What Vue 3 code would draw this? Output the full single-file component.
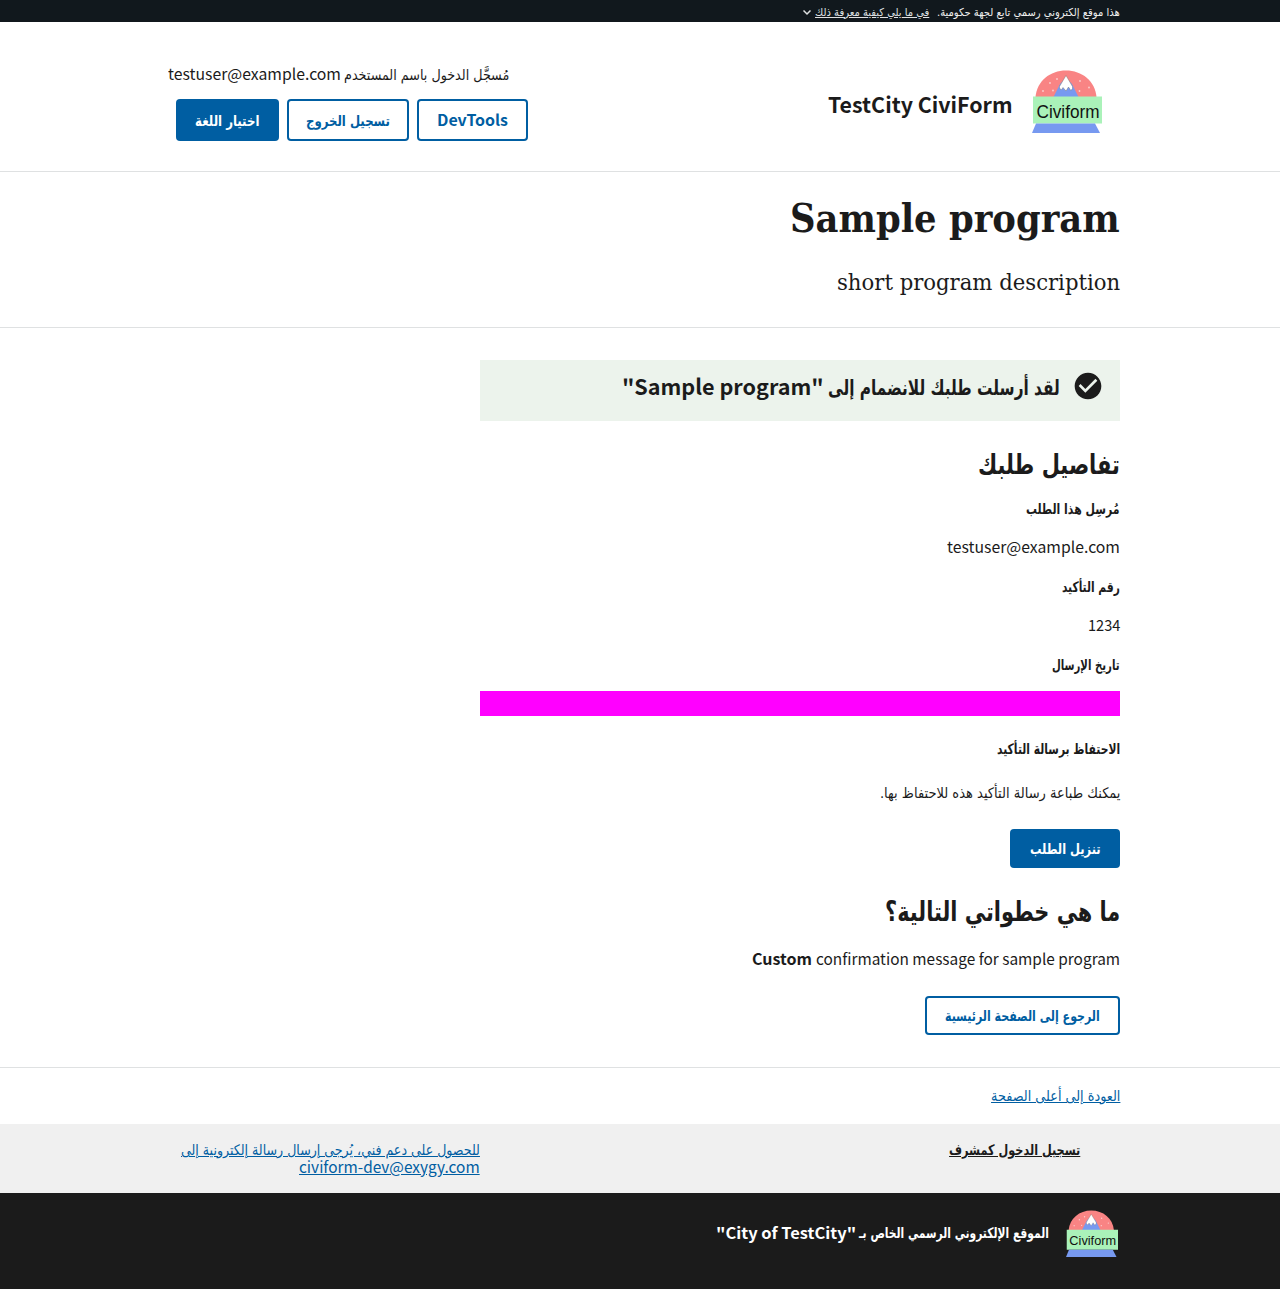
<script setup>
import { h } from 'vue'

// Condenses a single-line run of text to a given measure.
const vFit = {
  mounted(el, { value }) {
    const natural = el.offsetWidth
    if (!natural) return
    el.style.transform = `scaleX(${value / natural})`
    el.style.marginLeft = `${value - natural}px`
  },
}

const dots = [[10, 21], [17, 13], [20, 20.500], [24, 9], [47, 11], [46.500, 21], [56, 17.500]]

const CiviLogo = () =>
  h('svg', { viewBox: '0 0 70 63', role: 'img', overflow: 'visible' }, [
    h('path', { d: 'M3.500 27C5 11 18 .5 34 .5S63 11 64.500 27z', fill: '#f98484' }),
    ...dots.map(([x, y]) => h('circle', { cx: x + 1, cy: y, r: 0.9, fill: '#fbd0cf' })),
    h('path', { d: 'M21.500 27 28 14 34 8l6 6 6.500 13z', fill: '#7799f0' }),
    h('path', {
      d: 'M34 5.500 27.500 16.500v1.500l1.800 2 1.700-2.500 3 3.500 2.500-4 2.400 3.500 1.600-2v-2z',
      fill: '#fff', stroke: '#666', 'stroke-width': 0.4,
    }),
    h('path', { d: 'M1 26.500h69v27H1z', fill: '#aaf2b9' }),
    h('path', { d: 'M4 53.500h59l5 9.500H0z', fill: '#7799f0' }),
    h('text', {
      x: 4.500, y: 47.500, 'font-family': '"Liberation Sans", sans-serif', 'font-size': 17.500, 'font-weight': 400, direction: 'ltr',
      textLength: 63, lengthAdjust: 'spacingAndGlyphs', fill: '#111',
    }, 'Civiform'),
  ])
</script>

<template>
  <div class="page" dir="rtl" lang="ar">
    <div class="banner">
      <div class="wrap banner-row">
        <span v-fit="183" class="t">هذا موقع إلكتروني رسمي تابع لجهة حكومية.</span>
        <a v-fit="114" class="t how">في ما يلي كيفية معرفة ذلك</a>
        <svg class="chev" viewBox="0 0 8 6"><path d="M.5.5L4 4l3.500-3.500" fill="none" stroke="#dfe1e2" stroke-width="1.500" /></svg>
      </div>
    </div>

    <header class="top">
      <div class="wrap top-row">
        <div class="brand">
          <CiviLogo class="logo" />
          <span v-fit="185" class="t la brand-name">TestCity CiviForm</span>
        </div>
        <div class="account">
          <div class="who">
            <span v-fit="165" class="t">مُسجَّل الدخول باسم المستخدم</span>
            <span v-fit="173" class="t la">testuser@example.com</span>
          </div>
          <div class="actions">
            <button class="btn outline dev"><span v-fit="71" class="t la">DevTools</span></button>
            <button class="btn outline out"><span v-fit="84" class="t">تسجيل الخروج</span></button>
            <button class="btn lang"><span v-fit="64" class="t">اختيار اللغة</span></button>
          </div>
        </div>
      </div>
    </header>

    <section class="intro">
      <div class="wrap">
        <h1><span v-fit="330" class="t">Sample program</span></h1>
        <p class="desc"><span v-fit="283" class="t">short program description</span></p>
      </div>
    </section>

    <main class="wrap">
      <div class="content">
        <div class="alert">
          <svg class="check" viewBox="0 0 24 24"><path fill="#1b1b1b" d="M12 2C6.480 2 2 6.480 2 12s4.480 10 10 10 10-4.480 10-10S17.520 2 12 2zm-2 15-5-5 1.410-1.410L10 14.170l7.590-7.590L19 8l-9 9z" /></svg>
          <span v-fit="232" class="t">لقد أرسلت طلبك للانضمام إلى</span>
          <span v-fit="202" class="t la">"Sample program"</span>
        </div>
        <h2><span v-fit="142" class="t">تفاصيل طلبك</span></h2>
        <p class="row label"><span v-fit="94" class="t">مُرسِل هذا الطلب</span></p>
        <p class="row"><span v-fit="173" class="t la">testuser@example.com</span></p>
        <p class="row label"><span v-fit="58" class="t">رقم التأكيد</span></p>
        <p class="row"><span v-fit="32" class="t la">1234</span></p>
        <p class="row label"><span v-fit="68" class="t">تاريخ الإرسال</span></p>
        <div class="date"></div>
        <p class="row label keep"><span v-fit="123" class="t">الاحتفاظ برسالة التأكيد</span></p>
        <p class="row print"><span v-fit="241" class="t">يمكنك طباعة رسالة التأكيد هذه للاحتفاظ بها.</span></p>
        <button class="btn download"><span v-fit="71" class="t">تنزيل الطلب</span></button>
        <h2 class="next"><span v-fit="235" class="t">ما هي خطواتي التالية؟</span></h2>
        <p class="row custom" dir="ltr">
          <strong v-fit="60" class="t la">Custom</strong>
          <span v-fit="304" class="t la">confirmation message for sample program</span>
        </p>
        <button class="btn outline home"><span v-fit="155" class="t">الرجوع إلى الصفحة الرئيسية</span></button>
      </div>
    </main>

    <footer>
      <div class="back"><div class="wrap"><a v-fit="129" class="t link">العودة إلى أعلى الصفحة</a></div></div>
      <div class="support">
        <div class="wrap support-row">
          <a v-fit="131" class="t admin">تسجيل الدخول كمشرف</a>
          <div class="contact">
            <a v-fit="299" class="t link">للحصول على دعم فني، يُرجى إرسال رسالة إلكترونية إلى</a>
            <a v-fit="181" class="t la link">civiform-dev@exygy.com</a>
          </div>
        </div>
      </div>
      <div class="identity">
        <div class="wrap identity-row">
          <CiviLogo class="logo-small" />
          <span v-fit="190" class="t">الموقع الإلكتروني الرسمي الخاص بـ</span>
          <span v-fit="140" class="t la">"City of TestCity"</span>
        </div>
      </div>
    </footer>
  </div>
</template>

<style>
body { margin: 0; background: #fff; }
</style>

<style scoped>
.page { font-family: "DejaVu Sans", sans-serif; font-size: 14.500px; color: #1b1b1b; height: 1289px; overflow: hidden; }
.wrap { width: 960px; margin: 0 auto; }
.t { display: inline-block; white-space: nowrap; transform-origin: 100% 50%; flex-shrink: 0; }
.la { font-family: "Noto Sans CJK SC", sans-serif; font-size: 15.500px; direction: ltr; }
h1, h2, p { margin: 0; }

.banner { height: 22px; background: #11181d; color: #f0f0f0; font-size: 11px; line-height: 24px; }
.banner-row { display: flex; align-items: center; height: 25px; }
.how { margin-right: 8px; color: #dfe1e2; text-decoration: underline; }
.chev { width: 8px; height: 6px; margin-right: 4px; }

.top { height: 149px; border-bottom: 1px solid #dfe1e2; }
.top-row { display: flex; justify-content: space-between; }
.brand { display: flex; align-items: center; height: 67px; margin: 46px 18px 0 0; }
.logo { width: 70px; height: 63px; }
.brand-name { font-size: 21.500px; font-weight: 700; line-height: 30px; margin-right: 19px; padding-top: 4px; }
.account { width: 368px; padding-top: 40px; }
.who { display: flex; height: 26px; line-height: 26px; margin-right: 19px; gap: 3px; width: 341px; }
.who .la { line-height: 23px; }
.actions { display: flex; gap: 8px; margin-top: 11px; }
.btn { box-sizing: border-box; border: 0; border-radius: 4px; padding: 0; background: #005ea2; color: #fff; font: 700 14.500px "DejaVu Sans", sans-serif; height: 42px; display: flex; align-items: center; justify-content: center; }
.outline { background: #fff; color: #005ea2; box-shadow: inset 0 0 0 2px #005ea2; }
.btn .la { font-size: 15.500px; padding-bottom: 2px; }
.dev { width: 111px; }
.out { width: 122px; }
.lang { width: 103px; }
.out .t, .lang .t { padding-top: 1px; }

.intro { height: 155px; border-bottom: 1px solid #dfe1e2; }
h1 { font: 700 40px/50px "DejaVu Serif", serif; padding-top: 21px; }
.desc { font: 400 22px/30px "DejaVu Serif", serif; margin-top: 25px; }

.content { width: 640px; padding-top: 32px; height: 707px; }
.alert { height: 61px; background: #ecf3ec; display: flex; align-items: flex-start; font-size: 21px; font-weight: 700; line-height: 56px; }
.alert .la { font-size: 21.500px; margin-right: 5px; line-height: 52px; }
.check { width: 32px; height: 32px; margin: 10px 16px 0 12px; }
h2 { font-size: 27px; font-weight: 700; line-height: 48px; height: 48px; margin-top: 20px; }
.row { height: 39px; line-height: 39px; }
.row .la { line-height: 37px; }
.label { font-weight: 700; line-height: 41px; }
.date { height: 25px; background: #f0f; margin-top: 7px; }
.keep { margin-top: 13px; }
.print { margin-top: 5px; line-height: 41px; }
.download { width: 110px; height: 39px; margin-top: 17px; }
.next { margin-top: 20px; }
.custom { display: flex; justify-content: flex-end; gap: 4px; margin-top: 4px; }
.home { width: 195px; height: 39px; margin-top: 17px; }

.back { border-top: 1px solid #dfe1e2; height: 56px; line-height: 56px; }
.link { color: #005ea2; text-decoration: underline; }
.support { height: 69px; background: #f0f0f0; }
.support-row { display: flex; justify-content: space-between; padding-top: 17px; }
.admin { margin-right: 40px; font-weight: 700; line-height: 18px; text-decoration: underline; }
.contact { display: flex; flex-direction: column; align-items: flex-start; width: 320px; line-height: 18px; }
.contact .la { line-height: 15px; }
.identity { height: 96px; background: #1b1b1b; color: #fff; font-weight: 700; }
.identity-row { display: flex; align-items: center; height: 80px; }
.logo-small { width: 52px; height: 47px; margin: 0 2px 0 17px; }
.identity .la { margin-right: 3px; padding-bottom: 2px; }
</style>
